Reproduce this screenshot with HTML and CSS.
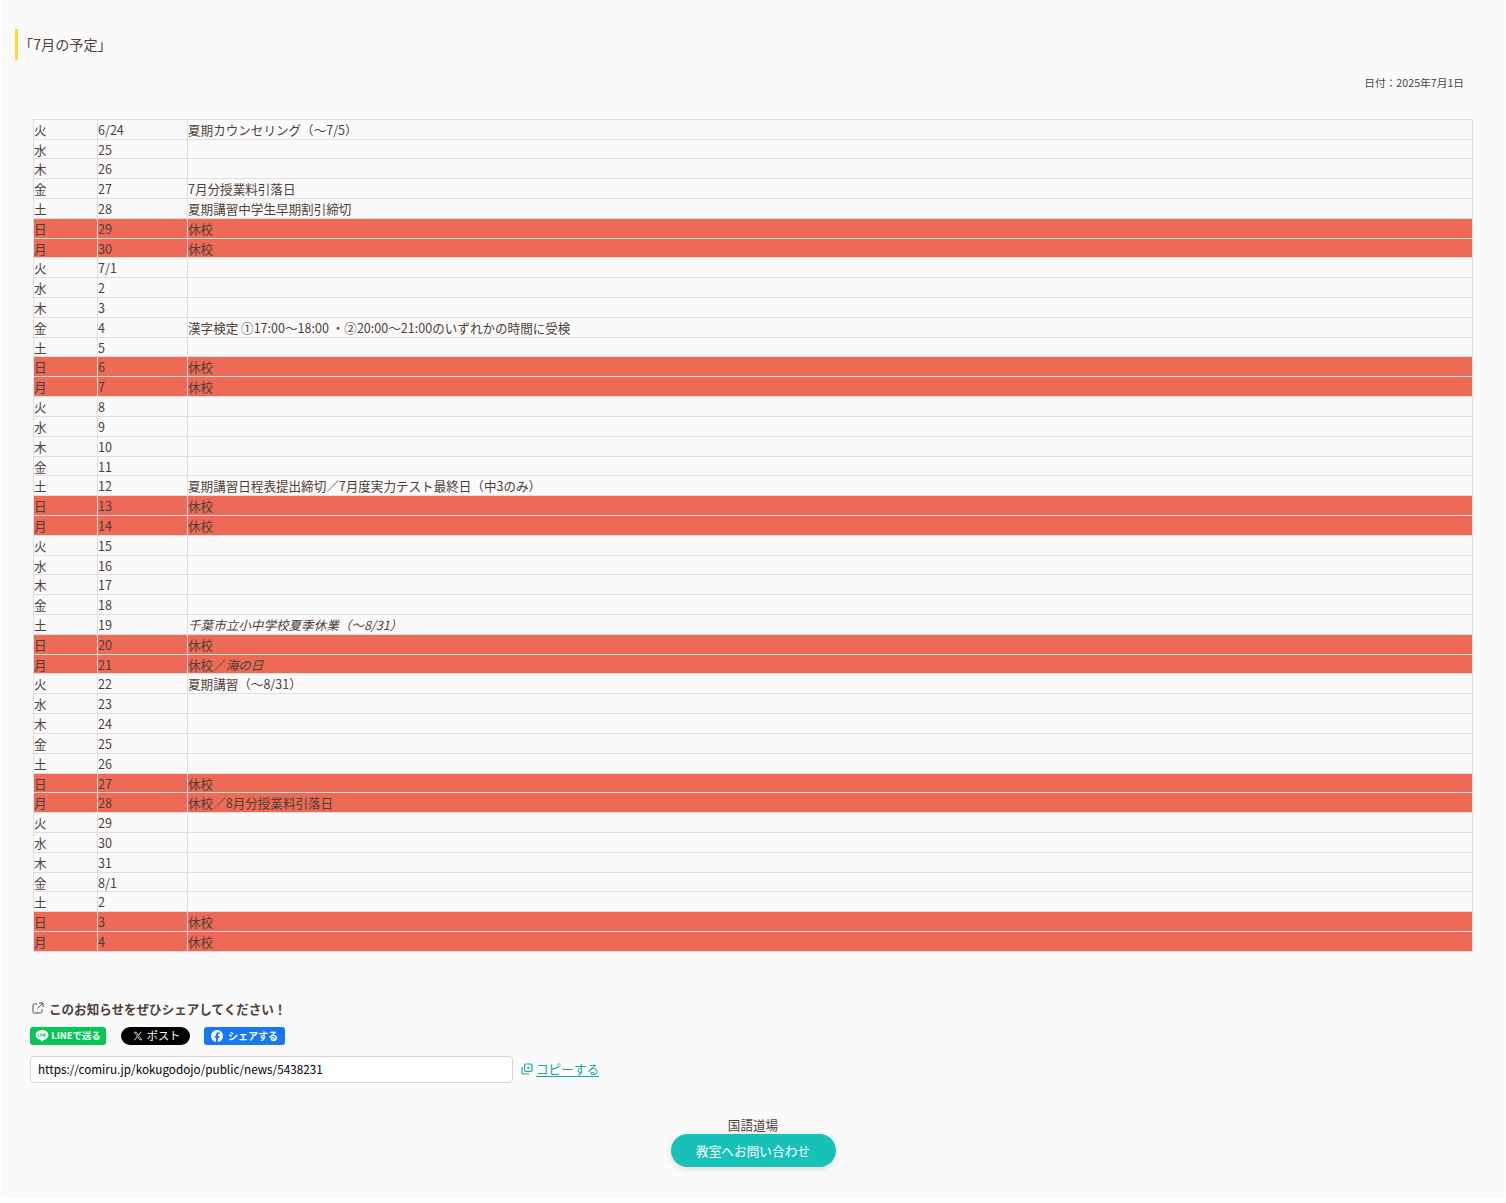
FILE: index.html
```html
<!DOCTYPE html>
<html lang="ja">
<head>
<meta charset="utf-8">
<title>「7月の予定」</title>
<link rel="stylesheet" href="styles.css">
</head>
<body>
<main class="page">
  <h1 class="title">「7月の予定」</h1>
  <p class="date">日付：2025年7月1日</p>
  <div class="table-wrap">
  <table class="schedule">
    <colgroup><col class="c1"><col class="c2"><col></colgroup>
    <tbody>
      <tr><td>火</td><td>6/24</td><td>夏期カウンセリング（～7/5）</td></tr>
      <tr><td>水</td><td>25</td><td></td></tr>
      <tr><td>木</td><td>26</td><td></td></tr>
      <tr><td>金</td><td>27</td><td>7月分授業料引落日</td></tr>
      <tr><td>土</td><td>28</td><td>夏期講習中学生早期割引締切</td></tr>
      <tr class="off"><td>日</td><td>29</td><td>休校</td></tr>
      <tr class="off"><td>月</td><td>30</td><td>休校</td></tr>
      <tr><td>火</td><td>7/1</td><td></td></tr>
      <tr><td>水</td><td>2</td><td></td></tr>
      <tr><td>木</td><td>3</td><td></td></tr>
      <tr><td>金</td><td>4</td><td>漢字検定 ①17:00～18:00 ・②20:00～21:00のいずれかの時間に受検</td></tr>
      <tr><td>土</td><td>5</td><td></td></tr>
      <tr class="off"><td>日</td><td>6</td><td>休校</td></tr>
      <tr class="off"><td>月</td><td>7</td><td>休校</td></tr>
      <tr><td>火</td><td>8</td><td></td></tr>
      <tr><td>水</td><td>9</td><td></td></tr>
      <tr><td>木</td><td>10</td><td></td></tr>
      <tr><td>金</td><td>11</td><td></td></tr>
      <tr><td>土</td><td>12</td><td>夏期講習日程表提出締切／7月度実力テスト最終日（中3のみ）</td></tr>
      <tr class="off"><td>日</td><td>13</td><td>休校</td></tr>
      <tr class="off"><td>月</td><td>14</td><td>休校</td></tr>
      <tr><td>火</td><td>15</td><td></td></tr>
      <tr><td>水</td><td>16</td><td></td></tr>
      <tr><td>木</td><td>17</td><td></td></tr>
      <tr><td>金</td><td>18</td><td></td></tr>
      <tr><td>土</td><td>19</td><td><em>千葉市立小中学校夏季休業（～8/31）</em></td></tr>
      <tr class="off"><td>日</td><td>20</td><td>休校</td></tr>
      <tr class="off"><td>月</td><td>21</td><td>休校／<em>海の日</em></td></tr>
      <tr><td>火</td><td>22</td><td>夏期講習（～8/31）</td></tr>
      <tr><td>水</td><td>23</td><td></td></tr>
      <tr><td>木</td><td>24</td><td></td></tr>
      <tr><td>金</td><td>25</td><td></td></tr>
      <tr><td>土</td><td>26</td><td></td></tr>
      <tr class="off"><td>日</td><td>27</td><td>休校</td></tr>
      <tr class="off"><td>月</td><td>28</td><td>休校／8月分授業料引落日</td></tr>
      <tr><td>火</td><td>29</td><td></td></tr>
      <tr><td>水</td><td>30</td><td></td></tr>
      <tr><td>木</td><td>31</td><td></td></tr>
      <tr><td>金</td><td>8/1</td><td></td></tr>
      <tr><td>土</td><td>2</td><td></td></tr>
      <tr class="off"><td>日</td><td>3</td><td>休校</td></tr>
      <tr class="off"><td>月</td><td>4</td><td>休校</td></tr>
    </tbody>
  </table>
  </div>
  <section class="share">
    <p class="share-head">
      <svg class="ext-icon" viewBox="0 0 12 12" width="12" height="12"><path d="M5 2H2.200A1.200 1.200 0 0 0 1 3.200v6.600A1.200 1.200 0 0 0 2.200 11h6.600A1.200 1.200 0 0 0 10 9.800V7M7 1h4v4M11 1 5.500 6.500" fill="none" stroke="#5a4a42" stroke-width="1"/></svg>
      <span>このお知らせをぜひシェアしてください！</span>
    </p>
    <div class="share-buttons">
      <a class="btn btn-line">
        <svg viewBox="0 0 14 14" width="14" height="14"><path d="M7 1C3.400 1 .6 3.200.6 6c0 2.500 2.200 4.500 5.100 4.900.6.100.4.700.3 1.300 0 .4.300.5.700.3 1.400-.8 6.700-3.300 6.700-6.500C13.400 3.200 10.600 1 7 1z" fill="#fff"/><path d="M3.200 4.700v2.600h1.500M5.600 4.700v2.600M6.800 7.300V4.700l1.800 2.600V4.700M11 4.700H9.600v2.600H11M9.600 6H11" fill="none" stroke="#06c755" stroke-width=".7"/></svg>
        <span>LINEで送る</span>
      </a>
      <a class="btn btn-x">
        <svg viewBox="0 0 24 24" width="10" height="10"><path d="M18.200 2h3.400l-7.400 8.500L23 22h-6.800l-5.300-7-6.100 7H1.400l7.900-9.100L1 2h7l4.800 6.400L18.200 2zm-1.200 18h1.900L7 3.900H5L17 20z" fill="#b9b9b9"/></svg>
        <span>ポスト</span>
      </a>
      <a class="btn btn-fb">
        <svg viewBox="0 0 16 16" width="12" height="12"><path d="M16 8a8 8 0 1 0-9.250 7.900v-5.600H4.700V8h2.050V6.240c0-2 1.200-3.120 3-3.120.88 0 1.800.16 1.800.16v2h-1c-1 0-1.300.62-1.300 1.250V8h2.220l-.35 2.300H9.250v5.600A8 8 0 0 0 16 8z" fill="#fff"/></svg>
        <span>シェアする</span>
      </a>
    </div>
    <div class="url-row">
      <input class="url-input" type="text" value="https://comiru.jp/kokugodojo/public/news/5438231" readonly>
      <a class="copy">
        <svg viewBox="0 0 12 12" width="12" height="12"><rect x="3.500" y="1" width="7.500" height="7.500" rx="1.500" fill="none" stroke="#17a79e" stroke-width="1.200"/><path d="M1 4v5.500A1.500 1.500 0 0 0 2.500 11H8" fill="none" stroke="#17a79e" stroke-width="1.200"/><circle cx="7.200" cy="4.800" r="1" fill="#17a79e"/></svg>
        <span class="copy-text">コピーする</span>
      </a>
    </div>
  </section>
  <footer class="contact">
    <p class="school">国語道場</p>
    <a class="contact-btn">教室へお問い合わせ</a>
  </footer>
</main>
</body>
</html>
```
FILE: styles.css
```css
* { box-sizing: border-box; }
html, body { margin: 0; padding: 0; background: #fff; }
body {
  font-family: "Noto Sans CJK JP", "Noto Sans", sans-serif;
  color: #4f3f37;
  font-size: 12.57px;
}
.page {
  margin: 0 1px;
  height: 1198px;
  background: #fafafa;
  padding: 29px 14px 0;
  overflow: hidden;
}
.title {
  margin: 0;
  height: 31px;
  border-left: 3px solid #fdd835;
  padding-left: 1px;
  font-size: 14.15px;
  font-weight: 400;
  line-height: 31px;
}
.date {
  margin: 15px 27px 0 0;
  text-align: right;
  font-size: 10.7px;
  line-height: 16px;
}
.table-wrap { padding: 27.7px 18px 0; }
.schedule {
  width: 1440px;
  border-collapse: collapse;
  table-layout: fixed;
}
.c1 { width: 64px; }
.c2 { width: 90px; }
.schedule td {
  border: 1px solid #dedede;
  padding: 1px 0 0 0;
  height: 19.82px;
  line-height: 17.82px;
  vertical-align: top;
  white-space: nowrap;
}
.off td { background: #ec6a56; }
.share { padding: 47.5px 0 0 15px; }
.share-head {
  margin: 0 0 0 2px;
  display: flex;
  align-items: center;
  gap: 5px;
  height: 18px;
  font-size: 12.55px;
  font-weight: 700;
}
.share-buttons {
  display: flex;
  margin-top: 10px;
  height: 18px;
}
.btn {
  display: flex;
  align-items: center;
  justify-content: center;
  color: #fff;
  font-weight: 700;
  height: 18px;
  border-radius: 3px;
}
.btn span { position: relative; top: -1px; }
.btn-line { width: 76px; background: #06c755; font-size: 9.4px; gap: 2px; }
.btn-x { width: 69px; margin-left: 15px; background: #000; border-radius: 9px; font-size: 11.2px; font-weight: 400; gap: 4px; padding-left: 2px; }
.btn-fb { width: 81px; margin-left: 14px; background: #1877f2; font-size: 10px; gap: 5px; }
.url-row {
  display: flex;
  align-items: center;
  margin-top: 11px;
}
.url-input {
  width: 483px;
  height: 27px;
  border: 1px solid #d6d6d6;
  border-radius: 4px;
  background: #fff;
  padding: 0 7px 2px;
  font-family: inherit;
  font-size: 11.72px;
  color: #000;
}
.copy {
  display: flex;
  align-items: center;
  margin: 0 0 2px 8px;
  gap: 3px;
  color: #17a79e;
  font-size: 12.6px;
}
.copy-text { text-decoration: underline; text-underline-offset: 2px; }
.contact {
  display: flex;
  flex-direction: column;
  align-items: center;
  margin-top: 34px;
}
.school { margin: 0 0 2px; line-height: 15px; text-align: center; }
.contact-btn {
  display: flex;
  align-items: center;
  justify-content: center;
  width: 165px;
  height: 33px;
  border-radius: 17px;
  background: #17c1b8;
  color: #fff;
  font-size: 12.67px;
  box-shadow: 0 2px 6px rgba(0,0,0,.12);
}
```
